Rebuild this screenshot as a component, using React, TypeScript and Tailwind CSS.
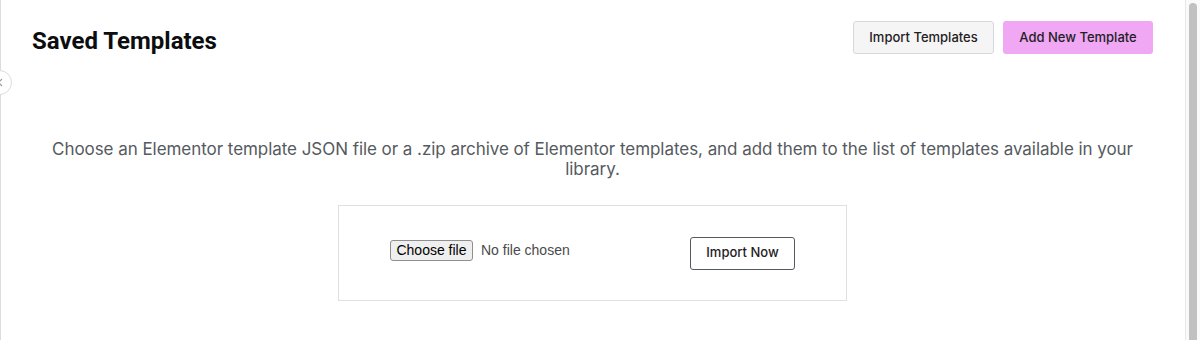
import React from "react";

export default function App() {
  return (
    <div className="relative flex h-[340px] w-[1200px] overflow-hidden bg-white">
      <main className="flex-1 border-l border-[#dcdcde] pl-[31px] pr-8">
        <header className="mt-[21px] flex h-[33px] items-center justify-between">
          <h1
            className="mt-[6px] text-[24px] font-bold leading-none text-[#0c0d0e]"
            style={{ fontFamily: "Roboto, 'Liberation Sans', sans-serif" }}
          >
            Saved Templates
          </h1>
          <div
            className="flex gap-[9px] text-[13px] font-medium text-[#1f2124]"
            style={{ fontFamily: "Inter, 'Liberation Sans', sans-serif" }}
          >
            <button className="h-[33px] w-[141px] rounded-[3px] border border-[#d5d8dc] bg-[#f5f5f5]">
              Import Templates
            </button>
            <button className="h-[33px] w-[150px] rounded-[3px] bg-[#f0a8f5]">
              Add New Template
            </button>
          </div>
        </header>

        <p
          className="mt-[85px] text-center text-[17px] leading-[20px] tracking-[-0.05px] text-[#555a60]"
          style={{ fontFamily: "Inter, 'Liberation Sans', sans-serif" }}
        >
          Choose an Elementor template JSON file or a .zip archive of Elementor templates, and add them to the list of
          templates available in your library.
        </p>

        <div className="mx-auto mt-[26px] flex h-[96px] w-[509px] items-center justify-between border border-[#e0e0e0] px-[51px]">
          <div
            className="mb-[5px] flex items-center gap-[8px] text-[14px]"
            style={{ fontFamily: "'Liberation Sans', Arial, sans-serif" }}
          >
            <span className="flex h-[21px] w-[83px] items-center justify-center rounded-[3px] border border-[#8f8f8f] bg-[#efefef] text-black">
              Choose file
            </span>
            <span className="text-[#4a4a4a]">No file chosen</span>
          </div>
          <button
            className="h-[33px] w-[105px] rounded-[3px] border border-[#555a60] bg-white text-[13px] font-medium text-[#1f2124]"
            style={{ fontFamily: "Inter, 'Liberation Sans', sans-serif" }}
          >
            Import Now
          </button>
        </div>
      </main>

      <div className="flex w-[15px] justify-center border-l border-[#e8e8e8] bg-[#fafafa] pt-[3px]">
        <div className="h-[400px] w-[8px] rounded-full bg-[#c1c1c1]" />
      </div>

      <div className="absolute left-[-13px] top-[70px] flex h-[25px] w-[25px] items-center justify-end rounded-full border border-[#dcdcde] bg-white pr-[8px]">
        <svg width="6" height="9" viewBox="0 0 6 9" fill="none">
          <path d="M5 1L1.5 4.5L5 8" stroke="#9a9a9a" strokeWidth="1.2" />
        </svg>
      </div>
    </div>
  );
}
